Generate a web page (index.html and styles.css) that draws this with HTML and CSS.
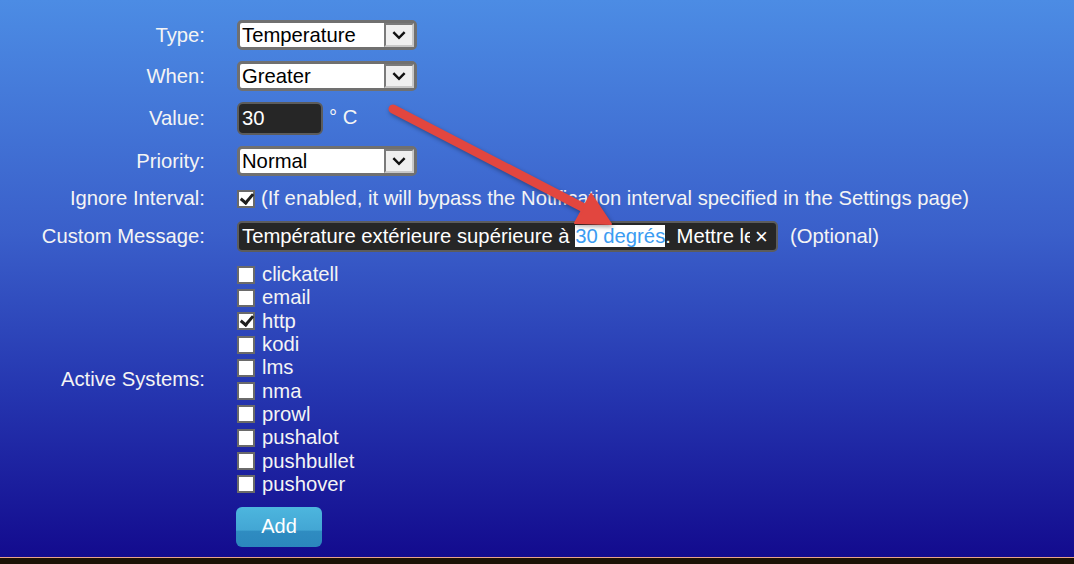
FILE: index.html
```html
<!DOCTYPE html>
<html lang="en">
<head>
    <meta charset="UTF-8">
    <meta name="viewport" content="width=device-width, initial-scale=1.0">
    <title>Add Notification</title>
    <link rel="stylesheet" href="styles.css">
</head>
<body>
    <div class="page">
        <form class="notify-form" action="#" method="post">
            <label class="field-label">Type:</label>
            <div class="field">
                <span class="select"><span class="select-text">Temperature</span><span class="select-arrow"><svg width="18" height="18" viewBox="0 0 16 16"><path d="M3 5.5 L8 10.5 L13 5.5" fill="none" stroke="#111" stroke-width="2.2"/></svg></span></span>
            </div>

            <label class="field-label">When:</label>
            <div class="field">
                <span class="select"><span class="select-text">Greater</span><span class="select-arrow"><svg width="18" height="18" viewBox="0 0 16 16"><path d="M3 5.5 L8 10.5 L13 5.5" fill="none" stroke="#111" stroke-width="2.2"/></svg></span></span>
            </div>

            <label class="field-label">Value:</label>
            <div class="field">
                <span class="value-input">30</span>
                <span class="unit">° C</span>
            </div>

            <label class="field-label">Priority:</label>
            <div class="field">
                <span class="select"><span class="select-text">Normal</span><span class="select-arrow"><svg width="18" height="18" viewBox="0 0 16 16"><path d="M3 5.5 L8 10.5 L13 5.5" fill="none" stroke="#111" stroke-width="2.2"/></svg></span></span>
            </div>

            <label class="field-label">Ignore Interval:</label>
            <div class="field">
                <span class="check checked"></span>
                <span class="hint">(If enabled, it will bypass the Notification interval specified in the Settings page)</span>
            </div>

            <label class="field-label">Custom Message:</label>
            <div class="field">
                <span class="message-input">
                    <span class="message-text">Température extérieure supérieure à <span class="selected">30 degrés</span>. Mettre le</span>
                    <span class="clear">×</span>
                </span>
                <span class="optional">(Optional)</span>
            </div>

            <label class="field-label">Active Systems:</label>
            <div class="systems">
                <div class="system"><span class="check"></span>clickatell</div>
                <div class="system"><span class="check"></span>email</div>
                <div class="system"><span class="check checked"></span>http</div>
                <div class="system"><span class="check"></span>kodi</div>
                <div class="system"><span class="check"></span>lms</div>
                <div class="system"><span class="check"></span>nma</div>
                <div class="system"><span class="check"></span>prowl</div>
                <div class="system"><span class="check"></span>pushalot</div>
                <div class="system"><span class="check"></span>pushbullet</div>
                <div class="system"><span class="check"></span>pushover</div>
            </div>

            <span></span>
            <div class="field">
                <button type="submit" class="add-btn">Add</button>
            </div>
        </form>

        <!-- annotation arrow drawn over the screenshot -->
        <svg class="annotation" width="1074" height="557" viewBox="0 0 1074 557">
            <g fill="#e2463f" stroke="#e2463f">
                <line x1="393" y1="109" x2="586" y2="209" stroke-width="9" stroke-linecap="round"/>
                <polygon points="611,224 575,223 591,194" stroke-width="2" stroke-linejoin="round"/>
            </g>
        </svg>
    </div>
    <div class="taskbar"></div>
</body>
</html>
```

FILE: styles.css
```css
html {
    background: #1b1205;
}
body {
    margin: 0;
    font-family: "Liberation Sans", Arial, sans-serif;
    font-size: 20.25px;
    color: #f4f4f4;
}
.page {
    position: relative;
    height: 557px;
    background: linear-gradient(to bottom, #4c8ce4 0%, #3a5fca 42%, #2536b0 70%, #130b8e 100%);
    overflow: hidden;
}
.notify-form {
    display: grid;
    grid-template-columns: 205px auto;
    column-gap: 32px;
    row-gap: 11px;
    padding-top: 20px;
    align-items: center;
}
.field-label {
    text-align: right;
    line-height: 23px;
}
.field {
    display: flex;
    align-items: center;
}
.select {
    display: flex;
    align-items: center;
    box-sizing: border-box;
    width: 180px;
    height: 30px;
    background: #fff;
    border: 3px solid #707070;
    border-radius: 5px;
    color: #000;
}
.select-text {
    flex: 1;
    padding-left: 2px;
}
.select-arrow {
    display: flex;
    align-items: center;
    justify-content: center;
    box-sizing: border-box;
    width: 30px;
    height: 24px;
    background: #efefef;
    border: 2px solid #7a7a7a;
    border-right-color: #c8c8c8;
    border-bottom-color: #c8c8c8;
}
.value-input {
    box-sizing: border-box;
    width: 86px;
    height: 33px;
    padding: 3px 3px;
    background: #262626;
    border: 2px solid #5c5c5c;
    border-radius: 6px;
    color: #fff;
}
.unit {
    margin-left: 6px;
    margin-top: -2px;
}
.check {
    display: inline-block;
    flex: none;
    box-sizing: border-box;
    width: 18px;
    height: 18px;
    background: #fff;
    border: 2px solid #6a6a6a;
    position: relative;
}
.check.checked::after {
    content: "";
    position: absolute;
    left: 4px;
    top: -1px;
    width: 5px;
    height: 10px;
    border: solid #1e1e1e;
    border-width: 0 3px 3px 0;
    transform: rotate(40deg);
}
.hint {
    margin-left: 6px;
}
.message-input {
    display: flex;
    align-items: center;
    box-sizing: border-box;
    width: 541px;
    height: 31px;
    padding: 0 8px 0 3px;
    background: #262626;
    border: 2px solid #5c5c5c;
    border-radius: 5px;
    color: #fff;
}
.message-text {
    width: 508px;
    overflow: hidden;
    white-space: nowrap;
}
.selected {
    background: #fff;
    color: #3b9cf2;
}
.clear {
    margin-left: 5px;
    font-size: 22px;
    line-height: 22px;
}
.optional {
    margin-left: 12px;
}
.systems {
    display: flex;
    flex-direction: column;
}
.system {
    display: flex;
    align-items: center;
    gap: 7px;
    height: 23.3px;
}
.add-btn {
    width: 86px;
    height: 40px;
    margin-left: -1px;
    border: none;
    border-radius: 6px;
    background: linear-gradient(to bottom, #4db6de 0%, #43a6d4 58%, #2f8cc1 60%, #2b86bd 100%);
    color: #fff;
    font-family: "Liberation Sans", Arial, sans-serif;
    font-size: 20px;
    cursor: pointer;
}
.annotation {
    position: absolute;
    left: 0;
    top: 0;
    pointer-events: none;
    filter: drop-shadow(1px 2px 2px rgba(0, 0, 0, 0.35));
}
.taskbar {
    height: 7px;
    border-top: 1px solid #eba28a;
    background: #1b1205;
}
```
